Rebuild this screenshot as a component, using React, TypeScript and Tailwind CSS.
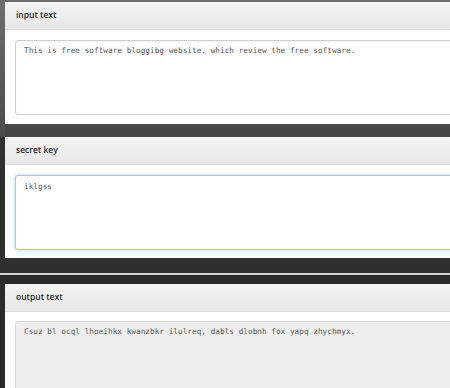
import { ReactNode } from 'react'

interface PanelProps {
  title: string
  children: ReactNode
}

function Panel({ title, children }: PanelProps) {
  return (
    <div className="w-[470px] bg-white">
      <div className="h-[28px] flex items-center pl-[11px] bg-gradient-to-b from-[#f4f4f4] to-[#e7e7e7] border-b border-[#dcdcdc]">
        <span className="font-['Open_Sans',sans-serif] font-semibold text-[8.5px] text-[#2a2a2a]">{title}</span>
      </div>
      {children}
    </div>
  )
}

const boxText = "font-['DejaVu_Sans_Mono','Liberation_Mono',monospace] text-[7.75px] leading-[10px] text-[#5a5a5a] px-[8px] pt-[5px]"

export default function App() {
  return (
    <div className="w-[450px] h-[388px] overflow-hidden bg-[#2b2b2b]">
      <div className="bg-gradient-to-b from-[#6e6e6e] to-[#4a4a4a] pt-[2px] pl-[5px]">
        <Panel title="input text">
          <div className="pt-[10px] pb-[9px] pl-[10px]">
            <div className={`h-[75px] rounded-[3px] border border-[#cfcfcf] bg-white shadow-[inset_0_1px_2px_rgba(0,0,0,0.06)] ${boxText}`}>
              This is free software bloggibg website, which review the free software.
            </div>
          </div>
        </Panel>
        <div className="h-[13px] bg-[#474747]" />
      </div>
      <div className="bg-[#2f2f2f] pl-[5px]">
        <Panel title="secret key">
          <div className="pt-[10px] pb-[8px] pl-[10px]">
            <div className={`h-[75px] rounded-[3px] border border-[#9fcdef] bg-white shadow-[0_0_3px_rgba(82,168,236,0.55)] ${boxText} pt-[6px]`}>
              iklgss
            </div>
          </div>
        </Panel>
        <div className="h-[15px]" />
      </div>
      <div className="h-[2px] bg-[#d4d4d4]" />
      <div className="pt-[9px] pl-[5px] bg-[#2b2b2b]">
        <Panel title="output text">
          <div className="pt-[9px] pl-[10px] h-[90px]">
            <div className={`h-[80px] rounded-[3px] border border-[#d6d6d6] bg-[#eeeeee] ${boxText}`}>
              Csuz bl ocql lhoeihkx kwanzbkr ilulreq, dabls dlobnh fox yapq zhychmyx.
            </div>
          </div>
        </Panel>
      </div>
    </div>
  )
}
